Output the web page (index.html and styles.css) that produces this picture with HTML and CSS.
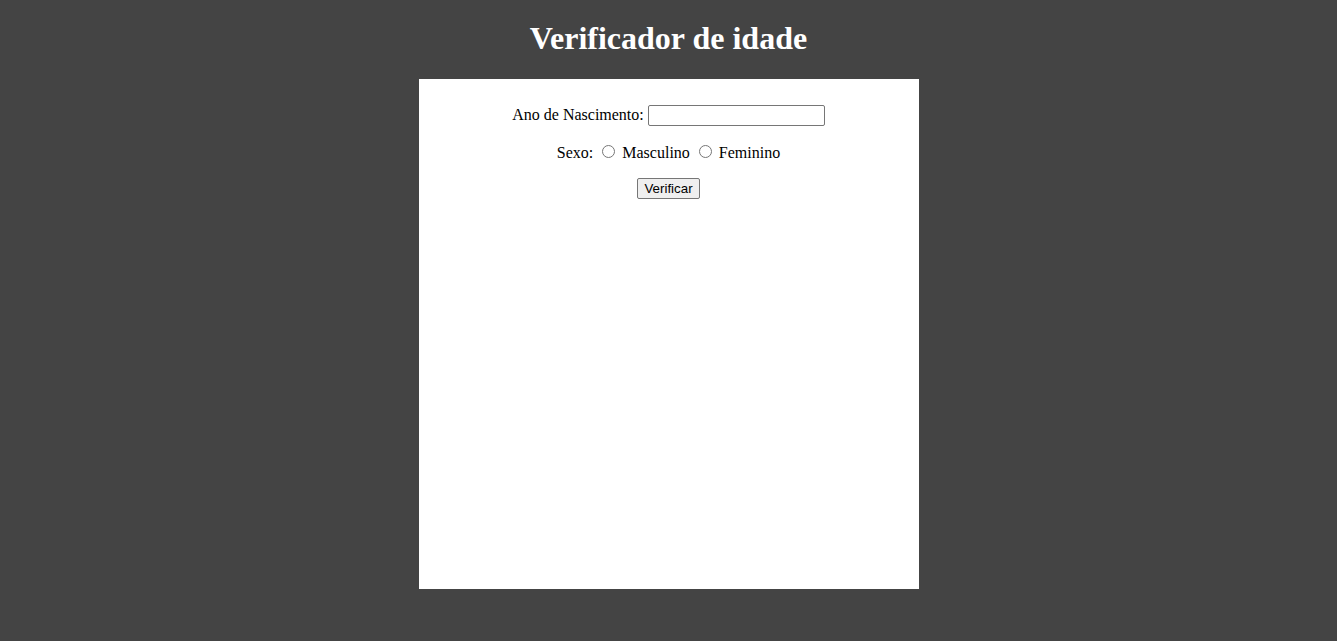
FILE: index.html
```html
<!DOCTYPE html>
<html lang="pt-BR">
<head>
<meta charset="utf-8">
<title>Verificador de idade</title>
<link rel="stylesheet" href="styles.css">
</head>
<body>
<header class="top">
  <h1 class="title">Verificador de idade</h1>
</header>
<section class="card">
  <p class="row">
    <label for="ano">Ano de Nascimento:</label>
    <input type="number" id="ano" class="field">
  </p>
  <p class="row">Sexo:
    <input type="radio" name="sexo" id="masc" class="radio"> <label for="masc">Masculino</label>
    <input type="radio" name="sexo" id="fem" class="radio"> <label for="fem">Feminino</label>
  </p>
  <p class="row">
    <button type="button" class="btn">Verificar</button>
  </p>
</section>
</body>
</html>
```
FILE: styles.css
```css
html, body {
  background: #444444;
}
body {
  margin: 8px;
  font-family: "Liberation Serif", "Times New Roman", serif;
  font-size: 16px;
  color: #000;
}
.title {
  color: #fff;
  text-align: center;
  font-size: 32px;
  font-weight: bold;
  margin: 12.44px 0 21.44px;
}
.card {
  background: #fff;
  width: 500px;
  height: 510px;
  box-sizing: border-box;
  margin: 0 auto;
  padding: 10px;
  text-align: center;
}
.row {
  margin: 16px 0;
}
.field {
  width: 171px;
  height: 17px;
  padding: 1px 2px;
  border: 1px solid #767676;
  border-radius: 2px;
  font-family: "Liberation Sans", Arial, sans-serif;
  font-size: 13.33px;
  -moz-appearance: textfield;
  appearance: textfield;
}
.field::-webkit-inner-spin-button,
.field::-webkit-outer-spin-button {
  -webkit-appearance: none;
  margin: 0;
}
.radio {
  width: 13px;
  height: 13px;
  margin: 3px 3px 0 5px;
}
.btn {
  font-family: "Liberation Sans", Arial, sans-serif;
  font-size: 13.33px;
  height: 21px;
  padding: 1px 6px;
  border: 1px solid #767676;
  border-radius: 2px;
  background: #efefef;
  color: #000;
}
```
